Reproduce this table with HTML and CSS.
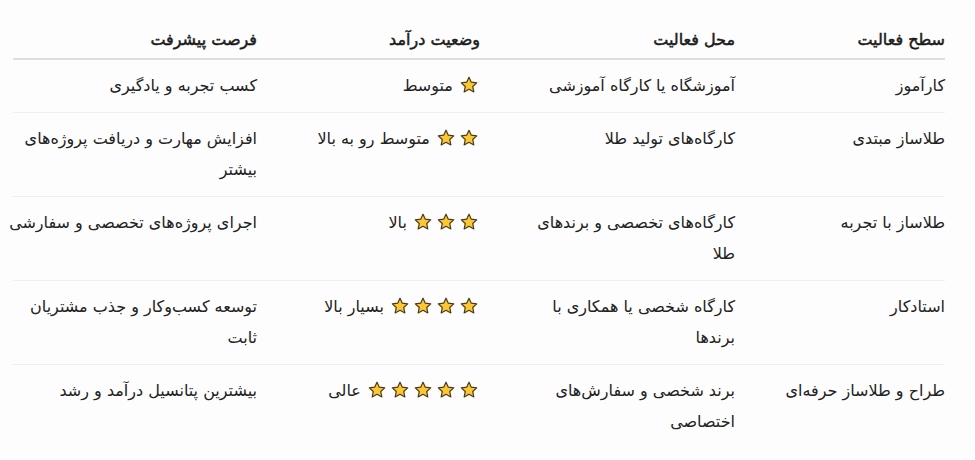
FILE: index.html
```html
<!DOCTYPE html>
<html lang="fa" dir="rtl">
<head>
<meta charset="utf-8">
<link rel="stylesheet" href="styles.css">
</head>
<body>
<svg width="0" height="0" class="defs" aria-hidden="true">
  <defs>
    <symbol id="star" viewBox="0 0 24 24">
      <path d="M12 1.6l3.1 6.6 7.2.9-5.3 4.95 1.4 7.15L12 17.65l-6.4 3.55L7 14.05 1.7 9.1l7.2-.9z" fill="#fcc731" stroke="#4a3a1c" stroke-width="1.6" stroke-linejoin="round"/>
    </symbol>
  </defs>
</svg>
<div class="page">
  <table class="levels">
    <thead>
      <tr>
        <th>سطح فعالیت</th>
        <th>محل فعالیت</th>
        <th>وضعیت درآمد</th>
        <th>فرصت پیشرفت</th>
      </tr>
    </thead>
    <tbody>
      <tr>
        <td>کارآموز</td>
        <td>آموزشگاه یا کارگاه آموزشی</td>
        <td><span class="stars"><svg class="star"><use href="#star"/></svg></span> متوسط</td>
        <td>کسب تجربه و یادگیری</td>
      </tr>
      <tr>
        <td>طلاساز مبتدی</td>
        <td>کارگاه‌های تولید طلا</td>
        <td><span class="stars"><svg class="star"><use href="#star"/></svg><svg class="star"><use href="#star"/></svg></span> متوسط رو به بالا</td>
        <td>افزایش مهارت و دریافت پروژه‌های بیشتر</td>
      </tr>
      <tr>
        <td>طلاساز با تجربه</td>
        <td>کارگاه‌های تخصصی و برندهای طلا</td>
        <td><span class="stars"><svg class="star"><use href="#star"/></svg><svg class="star"><use href="#star"/></svg><svg class="star"><use href="#star"/></svg></span> بالا</td>
        <td class="single">اجرای پروژه‌های تخصصی و سفارشی</td>
      </tr>
      <tr>
        <td>استادکار</td>
        <td>کارگاه شخصی یا همکاری با برندها</td>
        <td><span class="stars"><svg class="star"><use href="#star"/></svg><svg class="star"><use href="#star"/></svg><svg class="star"><use href="#star"/></svg><svg class="star"><use href="#star"/></svg></span> بسیار بالا</td>
        <td>توسعه کسب‌وکار و جذب مشتریان ثابت</td>
      </tr>
      <tr>
        <td>طراح و طلاساز حرفه‌ای</td>
        <td>برند شخصی و سفارش‌های اختصاصی</td>
        <td><span class="stars"><svg class="star"><use href="#star"/></svg><svg class="star"><use href="#star"/></svg><svg class="star"><use href="#star"/></svg><svg class="star"><use href="#star"/></svg><svg class="star"><use href="#star"/></svg></span> عالی</td>
        <td>بیشترین پتانسیل درآمد و رشد</td>
      </tr>
    </tbody>
  </table>
</div>
</body>
</html>
```

FILE: styles.css
```css
html, body {
  margin: 0;
  padding: 0;
  background: #fdfdfd;
}

body {
  font-family: "DejaVu Sans", "Noto Sans", sans-serif;
  font-size: 16px;
  color: #222;
  direction: rtl;
}

.defs {
  position: absolute;
  width: 0;
  height: 0;
  overflow: hidden;
}

.page {
  padding: 20px 30px 0 13px;
}

.levels {
  width: 100%;
  border-collapse: collapse;
  table-layout: fixed;
}

.levels th,
.levels td {
  text-align: right;
  vertical-align: top;
  line-height: 31px;
  padding: 10px 24px 11px 24px;
}

.levels th {
  font-weight: normal;
  -webkit-text-stroke: 0.5px #1a1a1a;
  padding-top: 4px;
  padding-bottom: 3px;
  border-bottom: 2px solid #dedede;
  color: #1a1a1a;
}

.levels td {
  border-bottom: 1px solid #efefef;
}

.levels td.single {
  white-space: nowrap;
}

.levels tbody tr:last-child td {
  border-bottom: none;
}

.levels th:nth-child(1),
.levels td:nth-child(1) {
  width: 162px;
  padding-right: 0;
}

.levels th:nth-child(2),
.levels td:nth-child(2) {
  width: 207px;
}

.levels th:nth-child(3),
.levels td:nth-child(3) {
  width: 175px;
}

.levels th:nth-child(4),
.levels td:nth-child(4) {
  width: 244px;
  padding-left: 0;
}

.stars {
  display: inline-flex;
  gap: 5px;
  margin-left: 2px;
  margin-right: 2px;
  vertical-align: -3px;
}

.star {
  width: 18px;
  height: 18px;
}
```
